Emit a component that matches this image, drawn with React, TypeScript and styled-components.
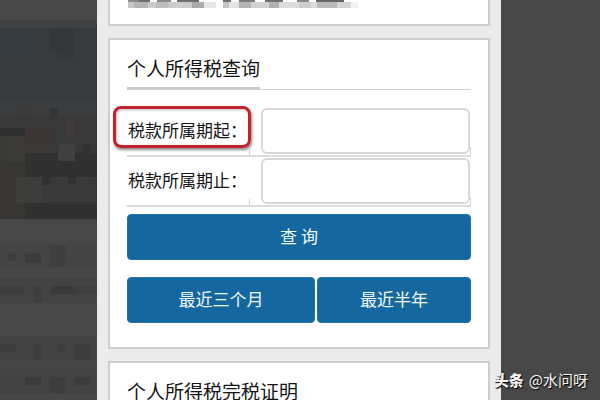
import React from "react";
import styled, { createGlobalStyle } from "styled-components";

const GlobalStyle = createGlobalStyle`
  *, *::before, *::after { box-sizing: border-box; }
  body {
    margin: 0;
    background: #474747;
    color: #151515;
    font-family: "Noto Sans CJK SC", "Noto Sans", sans-serif;
  }
`;

const Page = styled.div`
  position: relative;
  display: grid;
  grid-template-columns: 97fr 404fr 99fr;
  grid-template-rows: minmax(0, 1fr);
  height: 100vh;
  overflow: hidden;
`;

const Backdrop = styled.aside`
  background: #474747;
  overflow: hidden;
`;

const BackdropArt = styled.svg`
  display: block;
  width: 100%;
  height: 100%;
`;

const Screen = styled.main`
  display: flex;
  flex-direction: column;
  gap: 12px;
  padding: 0 11px;
  background: #ebebeb;
`;

const Card = styled.section`
  flex: none;
  padding: 14px 17px 24px;
  border: 2px solid #cdcdcd;
  background: #fff;
`;

const TopCard = styled(Card)`
  padding-top: 0;
  padding-bottom: 16px;
  border-top: 0;
`;

const Mosaic = styled.svg`
  display: block;
  width: 232px;
  height: 8px;
`;

const TitleBar = styled.header`
  display: flex;
  border-bottom: 1px solid #cfcfcf;
`;

const Title = styled.h2`
  margin: 0 0 -1px;
  padding-bottom: 5px;
  border-bottom: 3px solid #cbcbcb;
  font-size: 19px;
  line-height: 28px;
  font-weight: 400;
`;

const Form = styled.form`
  display: flex;
  flex-direction: column;
  padding-top: 17px;
`;

const Field = styled.div`
  position: relative;
  display: grid;
  grid-template-columns: 123px 1fr;
  column-gap: 11px;
  padding: 1px 1px 1px 0;
  border-bottom: 2px solid #dcdcdc;

  &::after {
    content: "";
    position: absolute;
    right: 0;
    bottom: 0;
    width: 1px;
    height: 8px;
    background: #d4d4d4;
  }
`;

const Label = styled.label<{ $marked?: boolean }>`
  position: relative;
  display: flex;
  align-items: center;
  padding: 0 0 2px 1px;
  font-size: 17px;
  line-height: 24px;
  white-space: nowrap;

  &::before {
    content: "";
    display: ${(p) => (p.$marked ? "block" : "none")};
    position: absolute;
    inset: -2px -1px 6px -14px;
    border: 3px solid #c4222b;
    border-radius: 8px;
    box-shadow: 1px 2px 3px #0007, inset 1px 1px 3px #0004;
  }

  &::after {
    content: "";
    position: absolute;
    right: 0;
    bottom: -1px;
    width: 1px;
    height: 6px;
    background: #d4d4d4;
  }
`;

const DateInput = styled.input`
  width: 100%;
  min-width: 0;
  height: 46px;
  padding: 0 12px;
  border: 2px solid #d8d8d8;
  border-radius: 6px;
  background: #fff;
  font: inherit;
  outline: none;
`;

const Button = styled.button`
  width: 100%;
  height: 46px;
  padding: 0 0 2px;
  border: 1px solid #2375a6;
  border-radius: 4px;
  background: #15689f;
  color: #f1f8fb;
  font: inherit;
  font-size: 17px;
  line-height: 24px;
  cursor: pointer;
`;

const SubmitRow = styled.div`
  display: grid;
  padding-top: 7px;
`;

const QuickRow = styled.div`
  display: grid;
  grid-template-columns: 188fr 154fr;
  gap: 2px;
  padding-top: 17px;
`;

const Watermark = styled.div`
  position: absolute;
  right: 12px;
  bottom: 8px;
  display: flex;
  gap: 5px;
  color: #f2f2f2;
  font-size: 15px;
  line-height: 24px;
  text-shadow: 1px 1px 1px #000;
`;

const Brand = styled.strong`
  font-weight: 900;
`;

type Tile = [number, number, number, number, string];

const photoTiles: Tile[] = [
  [0, 20, 97, 8, "#404142"],
  [0, 28, 97, 80, "#383b3e"],
  [0, 28, 34, 34, "#353b3e"],
  [50, 28, 24, 24, "#34363b"],
  [58, 52, 16, 8, "#35373b"],
  [42, 72, 16, 10, "#393a3d"],
  [0, 100, 97, 16, "#3a3c3d"],
  [17, 104, 16, 16, "#3c3a39"],
  [50, 108, 8, 12, "#343536"],
  [66, 112, 8, 16, "#403c3a"],
  [0, 116, 97, 103, "#383838"],
  [0, 128, 25, 8, "#303030"],
  [8, 136, 17, 83, "#3b3a37"],
  [0, 162, 25, 57, "#373633"],
  [25, 128, 28, 16, "#3c3535"],
  [25, 144, 33, 9, "#3b3937"],
  [25, 153, 72, 24, "#303030"],
  [66, 120, 8, 16, "#403a3a"],
  [58, 144, 17, 17, "#3f4041"],
  [83, 144, 8, 17, "#303030"],
  [16, 177, 26, 26, "#3d3d3b"],
  [42, 177, 50, 24, "#393939"],
  [42, 177, 8, 8, "#303030"],
  [68, 177, 8, 8, "#323232"],
  [25, 203, 72, 16, "#303030"],
];

const textTiles: Tile[] = [
  [0, 244, 97, 24, "#444444"],
  [8, 253, 8, 8, "#3d3d3d"],
  [25, 253, 16, 10, "#3c3c3c"],
  [50, 245, 16, 22, "#3f3f3f"],
  [68, 247, 8, 12, "#454545"],
  [0, 278, 97, 25, "#434343"],
  [0, 286, 25, 8, "#3e3e3e"],
  [34, 286, 8, 17, "#3e3e3e"],
  [50, 286, 25, 8, "#3a3a3a"],
  [75, 286, 22, 8, "#3f3f3f"],
  [0, 336, 97, 25, "#434343"],
  [0, 344, 16, 8, "#3c3c3c"],
  [34, 344, 8, 16, "#3e3e3e"],
  [58, 344, 8, 8, "#3e3e3e"],
  [75, 344, 16, 16, "#3d3d3d"],
  [0, 369, 97, 25, "#434343"],
  [25, 377, 16, 8, "#3b3b3b"],
  [50, 377, 16, 16, "#3d3d3d"],
  [75, 377, 16, 8, "#3b3b3b"],
];

const maskedText: Tile[] = [
  [1, 0, 10, 2, "#8b8b8b"],
  [11, 0, 12, 2, "#6f6f6f"],
  [30, 0, 14, 2, "#8a8a8a"],
  [50, 0, 22, 2, "#707070"],
  [96, 0, 8, 2, "#707070"],
  [112, 0, 16, 2, "#7d7d7d"],
  [138, 0, 18, 2, "#707070"],
  [170, 0, 12, 2, "#888888"],
  [189, 0, 28, 2, "#666666"],
  [1, 2, 6, 6, "#c7c7c7"],
  [7, 2, 14, 6, "#b5b5b5"],
  [21, 2, 8, 6, "#cbcbcb"],
  [29, 2, 12, 6, "#bdbdbd"],
  [41, 2, 24, 6, "#cccccc"],
  [65, 2, 12, 6, "#aaaaaa"],
  [77, 2, 12, 6, "#e6e6e6"],
  [96, 2, 6, 6, "#c3c3c3"],
  [102, 2, 10, 6, "#e4e4e4"],
  [112, 2, 12, 6, "#b4b4b4"],
  [124, 2, 18, 6, "#d2d2d2"],
  [142, 2, 10, 6, "#b0b0b0"],
  [152, 2, 20, 6, "#dcdcdc"],
  [172, 2, 12, 6, "#cecece"],
  [184, 2, 6, 6, "#dddddd"],
  [190, 2, 20, 6, "#bbbbbb"],
  [210, 2, 14, 6, "#d5d5d5"],
  [224, 2, 7, 6, "#f2f2f2"],
];

function Tiles({ items }: { items: Tile[] }) {
  return (
    <>
      {items.map(([x, y, width, height, fill], i) => (
        <rect key={i} x={x} y={y} width={width} height={height} fill={fill} />
      ))}
    </>
  );
}

export default function App() {
  return (
    <>
      <GlobalStyle />
      <Page>
        <Backdrop>
          <BackdropArt viewBox="0 0 97 400" preserveAspectRatio="none" aria-hidden="true">
            <Tiles items={photoTiles} />
            <Tiles items={textTiles} />
          </BackdropArt>
        </Backdrop>
        <Screen>
          <TopCard>
            <Mosaic viewBox="0 0 232 8" aria-hidden="true">
              <Tiles items={maskedText} />
            </Mosaic>
          </TopCard>
          <Card>
            <TitleBar>
              <Title>个人所得税查询</Title>
            </TitleBar>
            <Form onSubmit={(e) => e.preventDefault()}>
              <Field>
                <Label htmlFor="period-start" $marked>税款所属期起：</Label>
                <DateInput id="period-start" type="text" />
              </Field>
              <Field>
                <Label htmlFor="period-end">税款所属期止：</Label>
                <DateInput id="period-end" type="text" />
              </Field>
              <SubmitRow>
                <Button type="submit">查 询</Button>
              </SubmitRow>
              <QuickRow>
                <Button type="button">最近三个月</Button>
                <Button type="button">最近半年</Button>
              </QuickRow>
            </Form>
          </Card>
          <Card>
            <TitleBar>
              <Title>个人所得税完税证明</Title>
            </TitleBar>
          </Card>
        </Screen>
        <Backdrop />
        <Watermark>
          <Brand>头条</Brand>
          <span>@水问呀</span>
        </Watermark>
      </Page>
    </>
  );
}
